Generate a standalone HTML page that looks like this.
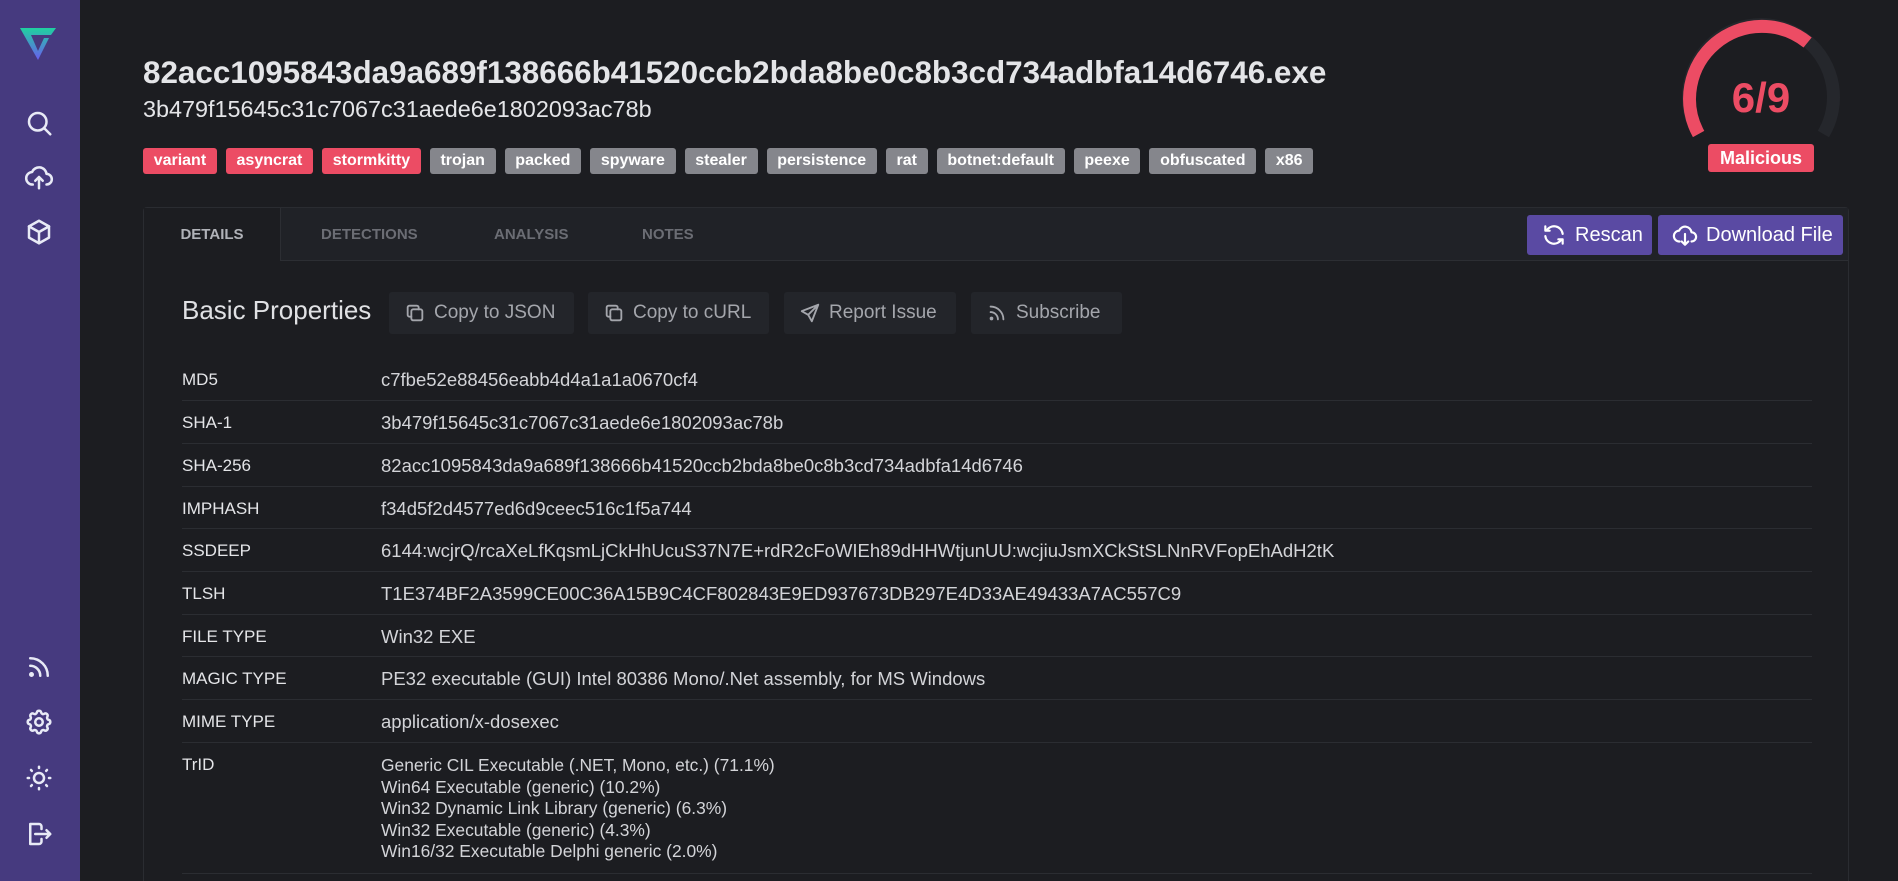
<!DOCTYPE html>
<html style="width:1898px;height:881px;overflow:hidden"><head><meta charset="utf-8"><style>
*{box-sizing:border-box;margin:0;padding:0}
body{width:1898px;height:881px;overflow:hidden;background:#1c1d21;font-family:"Liberation Sans",sans-serif;color:#d6d7db;position:relative}
.sb{position:absolute;left:0;top:0;width:80px;height:881px;background:#463a7f}
.sb svg{position:absolute;left:24px;width:30px;height:30px;fill:none;stroke:#e8eaf6;stroke-width:2;stroke-linecap:round;stroke-linejoin:round}
.title{position:absolute;left:143px;top:55px;font-size:31.4px;font-weight:bold;color:#e4e5e8}
.sub{position:absolute;left:143px;top:96px;font-size:23.4px;color:#e4e5e8}
.tags{position:absolute;left:143px;top:148px;display:flex;gap:9px}
.tag{height:26px;padding:0 10.7px;border-radius:3px;font-size:16px;font-weight:bold;color:#fff;display:flex;align-items:center;background:#85868c}
.tag.r{background:#ec4c64}
.card{position:absolute;left:143px;top:207px;width:1706px;height:680px;border:1px solid #2a2c31;border-radius:4px;background:#1c1d21}
.tabbar{position:absolute;left:0;top:0;right:0;height:53px;background:#202227;border-bottom:1px solid #2c2e33}
.tab{position:absolute;top:18px;font-size:15px;font-weight:bold;color:#6b6d74}
.tab.a{left:0;top:0;width:137px;height:53px;background:#1c1d21;color:#b0b2b8;padding-top:18px;text-align:center;border-right:1px solid #2c2e33}
.btn{position:absolute;top:7px;height:40px;background:#5a4aa3;border-radius:3px;color:#fff;font-size:20px;display:flex;align-items:center;gap:8px;padding-left:14px}
.btn svg{width:26px;height:26px;fill:none;stroke:#fff;stroke-width:2;stroke-linecap:round;stroke-linejoin:round}
.bp{position:absolute;left:182px;top:295px;font-size:26px;color:#e0e1e4}
.gb{position:absolute;top:292px;height:42px;background:#23252a;border-radius:3px;color:#a4a6ac;font-size:19px;display:flex;align-items:center;gap:8px;padding-left:15px}
.gb svg{width:22px;height:22px;fill:none;stroke:#a4a6ac;stroke-width:2;stroke-linecap:round;stroke-linejoin:round}
.row{position:absolute;left:182px;width:1630px;border-bottom:1px solid #2b2d32;font-size:17px}
.row .k{position:absolute;left:0;top:12px;color:#e4e5e8}
.row .v{position:absolute;left:199px;top:11px;color:#d3d4d8;font-size:18.5px}
.row .v.t{font-size:17.4px;line-height:21.5px;top:12px}
</style></head><body>
<div class="sb">
<svg style="top:24px;left:18px;width:40px;height:36px" viewBox="0 0 40 36"><defs><linearGradient id="g" x1="0" y1="0" x2="0" y2="1"><stop offset="0" stop-color="#1fd1a0"/><stop offset="1" stop-color="#6a5cf0"/></linearGradient></defs><path d="M2 4 H38 L33 11 H13 L20 27 L26 14 H31 L20 36 Z" fill="url(#g)" stroke="none"/></svg>
<svg style="top:108px" viewBox="0 0 24 24"><circle cx="11" cy="11" r="7"/><path d="M16 16l5 5"/></svg>
<svg style="top:162px" viewBox="0 0 24 24"><path d="M7 18a5 5 0 0 1-.5-10 6 6 0 0 1 11.5 1.5 4 4 0 0 1 0 8.5"/><path d="M12 21v-9M9 15l3-3 3 3"/></svg>
<svg style="top:217px" viewBox="0 0 24 24"><path d="M12 3l8 4.5v9L12 21l-8-4.5v-9z"/><path d="M4 7.5l8 4.5 8-4.5M12 12v9"/></svg>
<svg style="top:652px" viewBox="0 0 24 24"><path d="M5 11a8 8 0 0 1 8 8M5 5a14 14 0 0 1 14 14"/><circle cx="6" cy="18" r="1" fill="#e8eaf6"/></svg>
<svg style="top:707px" viewBox="0 0 24 24"><circle cx="12" cy="12" r="3"/><path d="M10.3 4.3c.4-1.8 3-1.8 3.4 0a1.7 1.7 0 0 0 2.6 1.1c1.5-.9 3.3.8 2.4 2.4a1.7 1.7 0 0 0 1 2.5c1.8.4 1.8 3 0 3.4a1.7 1.7 0 0 0-1 2.6c.9 1.5-.8 3.3-2.4 2.4a1.7 1.7 0 0 0-2.6 1c-.4 1.8-3 1.8-3.4 0a1.7 1.7 0 0 0-2.6-1c-1.5.9-3.3-.8-2.4-2.4a1.7 1.7 0 0 0-1-2.6c-1.8-.4-1.8-3 0-3.4a1.7 1.7 0 0 0 1-2.5c-.9-1.6.8-3.3 2.4-2.4a1.7 1.7 0 0 0 2.6-1.1z"/></svg>
<svg style="top:763px" viewBox="0 0 24 24"><circle cx="12" cy="12" r="4"/><path d="M3 12h1M20 12h1M12 3v1M12 20v1M5.6 5.6l.7.7M17.7 17.7l.7.7M5.6 18.4l.7-.7M17.7 6.3l.7-.7"/></svg>
<svg style="top:819px" viewBox="0 0 24 24"><path d="M14 8V6a2 2 0 0 0-2-2H5v16h7a2 2 0 0 0 2-2v-2M9 12h12l-3-3M21 12l-3 3"/></svg>
</div>
<div class="title">82acc1095843da9a689f138666b41520ccb2bda8be0c8b3cd734adbfa14d6746.exe</div>
<div class="sub">3b479f15645c31c7067c31aede6e1802093ac78b</div>
<div class="tags"><span class="tag r">variant</span><span class="tag r">asyncrat</span><span class="tag r">stormkitty</span><span class="tag">trojan</span><span class="tag">packed</span><span class="tag">spyware</span><span class="tag">stealer</span><span class="tag">persistence</span><span class="tag">rat</span><span class="tag">botnet:default</span><span class="tag">peexe</span><span class="tag">obfuscated</span><span class="tag">x86</span></div>
<svg style="position:absolute;left:1676px;top:13px" width="170" height="170" viewBox="0 0 170 170">
<path d="M22.6 121 A72.5 72.5 0 1 1 147.4 121" fill="none" stroke="#25272c" stroke-width="13"/>
<path d="M22.6 121 A72.5 72.5 0 0 1 131.6 29.5" fill="none" stroke="#ec4c64" stroke-width="13"/>
<text x="85" y="99" text-anchor="middle" font-family="Liberation Sans,sans-serif" font-size="42" font-weight="bold" fill="#ec4c64">6/9</text>
</svg>
<div style="position:absolute;left:1708px;top:144px;width:106px;height:28px;background:#ec4c64;border-radius:3px;color:#fff;font-weight:bold;font-size:18px;text-align:center;line-height:28px">Malicious</div>
<div class="card">
<div class="tabbar">
<div class="tab a">DETAILS</div>
<div class="tab" style="left:177px">DETECTIONS</div>
<div class="tab" style="left:350px">ANALYSIS</div>
<div class="tab" style="left:498px">NOTES</div>
<div class="btn" style="left:1383px;width:125px"><svg viewBox="0 0 24 24"><path d="M20 11a8 8 0 0 0-14.9-3M4 4v4h4M4 13a8 8 0 0 0 14.9 3M20 20v-4h-4"/></svg>Rescan</div>
<div class="btn" style="left:1514px;width:185px"><svg viewBox="0 0 24 24"><path d="M7 18a5 5 0 0 1-.5-10 6 6 0 0 1 11.5 1.5 4 4 0 0 1 0 8.5"/><path d="M12 11v10M9 18l3 3 3-3"/></svg>Download File</div>
</div>
</div>
<div class="bp">Basic Properties</div>
<div class="gb" style="left:389px;width:185px"><svg viewBox="0 0 24 24"><rect x="8" y="8" width="12" height="12" rx="2"/><path d="M16 8V6a2 2 0 0 0-2-2H6a2 2 0 0 0-2 2v8a2 2 0 0 0 2 2h2"/></svg>Copy to JSON</div>
<div class="gb" style="left:588px;width:181px"><svg viewBox="0 0 24 24"><rect x="8" y="8" width="12" height="12" rx="2"/><path d="M16 8V6a2 2 0 0 0-2-2H6a2 2 0 0 0-2 2v8a2 2 0 0 0 2 2h2"/></svg>Copy to cURL</div>
<div class="gb" style="left:784px;width:172px"><svg viewBox="0 0 24 24"><path d="M21 3L10 14M21 3l-7 18-4-7-7-4z"/></svg>Report Issue</div>
<div class="gb" style="left:971px;width:151px"><svg viewBox="0 0 24 24"><path d="M5 11a8 8 0 0 1 8 8M5 5a14 14 0 0 1 14 14"/><circle cx="6" cy="18" r="1" fill="#a4a6ac"/></svg>Subscribe</div>

<div class="row" style="top:358px;height:43px"><span class="k">MD5</span><span class="v">c7fbe52e88456eabb4d4a1a1a0670cf4</span></div>
<div class="row" style="top:401px;height:43px"><span class="k">SHA-1</span><span class="v">3b479f15645c31c7067c31aede6e1802093ac78b</span></div>
<div class="row" style="top:444px;height:43px"><span class="k">SHA-256</span><span class="v">82acc1095843da9a689f138666b41520ccb2bda8be0c8b3cd734adbfa14d6746</span></div>
<div class="row" style="top:487px;height:42px"><span class="k">IMPHASH</span><span class="v">f34d5f2d4577ed6d9ceec516c1f5a744</span></div>
<div class="row" style="top:529px;height:43px"><span class="k">SSDEEP</span><span class="v">6144:wcjrQ/rcaXeLfKqsmLjCkHhUcuS37N7E+rdR2cFoWIEh89dHHWtjunUU:wcjiuJsmXCkStSLNnRVFopEhAdH2tK</span></div>
<div class="row" style="top:572px;height:43px"><span class="k">TLSH</span><span class="v">T1E374BF2A3599CE00C36A15B9C4CF802843E9ED937673DB297E4D33AE49433A7AC557C9</span></div>
<div class="row" style="top:615px;height:42px"><span class="k">FILE TYPE</span><span class="v">Win32 EXE</span></div>
<div class="row" style="top:657px;height:43px"><span class="k">MAGIC TYPE</span><span class="v">PE32 executable (GUI) Intel 80386 Mono/.Net assembly, for MS Windows</span></div>
<div class="row" style="top:700px;height:43px"><span class="k">MIME TYPE</span><span class="v">application/x-dosexec</span></div>
<div class="row" style="top:743px;height:131px"><span class="k">TrID</span><span class="v t">Generic CIL Executable (.NET, Mono, etc.) (71.1%)<br>Win64 Executable (generic) (10.2%)<br>Win32 Dynamic Link Library (generic) (6.3%)<br>Win32 Executable (generic) (4.3%)<br>Win16/32 Executable Delphi generic (2.0%)</span></div>
</body></html>
